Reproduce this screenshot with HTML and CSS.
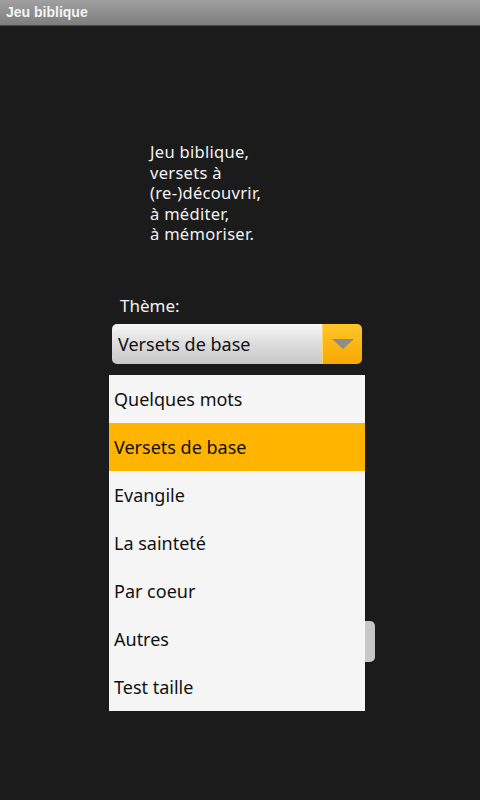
FILE: index.html
```html
<!DOCTYPE html>
<html lang="fr">
<head>
    <meta charset="UTF-8">
    <meta name="viewport" content="width=device-width, initial-scale=1.0">
    <title>Jeu biblique</title>
    <link rel="stylesheet" href="styles.css">
</head>
<body>
    <div class="titleBar">Jeu biblique</div>
    <div class="screen">
        <p class="intro">Jeu biblique,<br>versets à<br>(re-)découvrir,<br>à méditer,<br>à mémoriser.</p>
        <div class="themeLabel">Thème:</div>
        <div class="spinner">
            <div class="spinnerText">Versets de base</div>
            <div class="spinnerBtn"><span class="arrow"></span></div>
        </div>
        <div class="startBtn"></div>

        <!-- liste ouverte du spinner -->
        <ul class="dropList">
            <li>Quelques mots</li>
            <li class="selected">Versets de base</li>
            <li>Evangile</li>
            <li>La sainteté</li>
            <li>Par coeur</li>
            <li>Autres</li>
            <li>Test taille</li>
        </ul>
    </div>
</body>
</html>
```

FILE: styles.css
```css
*{padding: 0; margin: 0; box-sizing: border-box;}
ul{list-style: none;}

body{
    width : 480px;
    height: 800px;
    background-color: #1b1b1b;
    font-family: "Noto Sans", "Open Sans", sans-serif;
    color : #f2f2f2;
    overflow: hidden;
}
.titleBar{
    height: 26px;
    padding-left: 6px;
    background: linear-gradient(#a0a0a0, #7e7e7e);
    border-bottom: 1px solid #4a4a4a;
    font-family: "Liberation Sans", Arial, sans-serif;
    font-size: 14px;
    font-weight: bold;
    line-height: 25px;
    color : #f4f4f4;
}
.screen{
    position: relative;
    height: 774px;
    padding-top: 116px;
}
.intro{
    margin-left: 150px;
    font-size: 16.5px;
    line-height: 20.5px;
    letter-spacing: 0.3px;
}
.themeLabel{
    margin : 49px 0 0 120px;
    font-size: 17px;
}
.spinner{
    margin : 7px 0 0 112px;
    width : 250px;
    height: 40px;
    display: flex;
    border-radius: 5px;
    overflow: hidden;
}
.spinnerText{
    flex: 1;
    padding-left: 6px;
    background: linear-gradient(#f6f6f6, #dcdcdc 50%, #c8c8c8);
    color : #111;
    font-size: 18px;
    line-height: 40px;
}
.spinnerBtn{
    width : 40px;
    display: flex;
    align-items: center;
    justify-content: center;
    background: linear-gradient(#ffc62a, #f6a800);
    border-left: 1px solid #ffd760;
}
.arrow{
    width : 0;
    height: 0;
    border-left: 11px solid transparent;
    border-right: 11px solid transparent;
    border-top: 10px solid #8c8c8c;
}
.startBtn{
    margin : 257px 0 0 115px;
    width : 260px;
    height: 41px;
    border-radius: 5px;
    background: linear-gradient(90deg, #e0e0e0, #f4f4f4 60%, #c4c4c4);
}
.dropList{
    position: absolute;
    left: 109px;
    top: 349px;
    width : 256px;
    background-color: #f5f5f5;
}
.dropList li{
    height: 48px;
    padding-left: 5px;
    font-size: 18px;
    line-height: 48px;
    color : #111;
}
.dropList li.selected{
    background-color: #ffb400;
}
```
